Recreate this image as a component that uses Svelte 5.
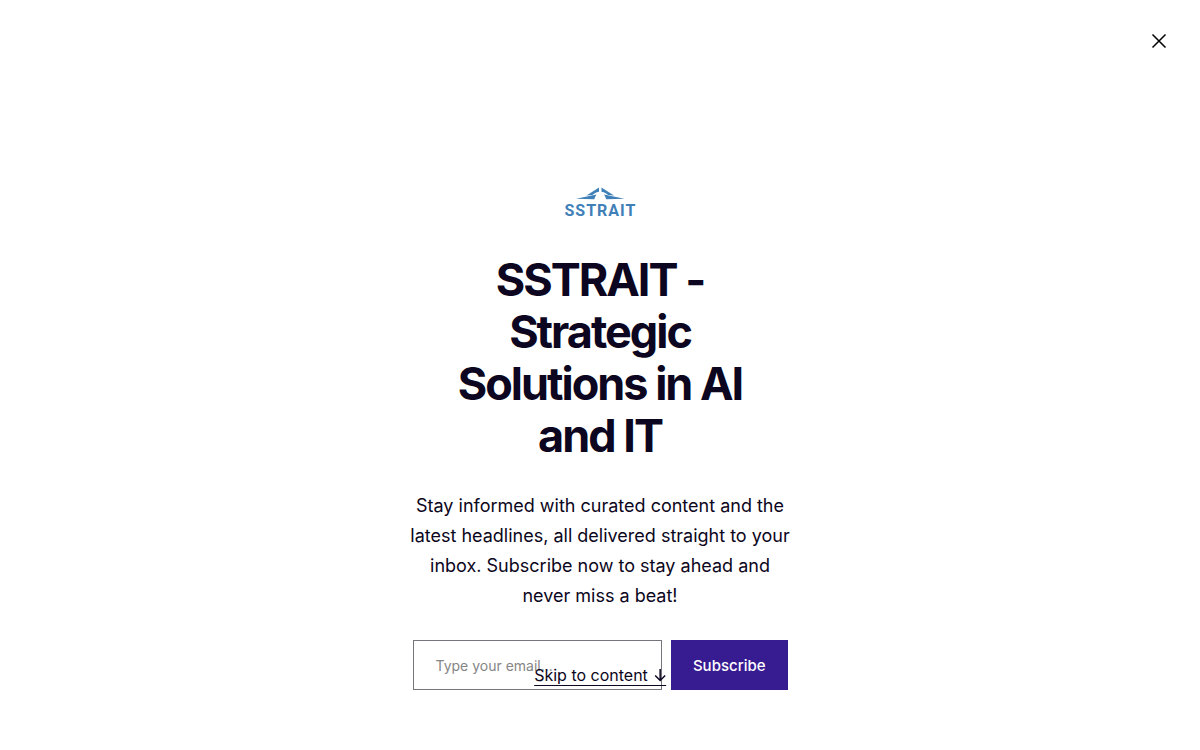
<script>
  let open = true;
  let email = "";
</script>

{#if open}
  <main class="welcome">
    <header class="bar">
      <button type="button" class="close" aria-label="Close" on:click={() => (open = false)}>
        <svg viewBox="0 0 16 16" aria-hidden="true">
          <path d="M1.5 1.5 14.5 14.5M14.5 1.5 1.5 14.5" />
        </svg>
      </button>
    </header>

    <section class="cover">
      <div class="logo">
        <!-- roof mark -->
        <svg viewBox="0 0 50 13" aria-hidden="true">
          <path d="M24 0.5V4.800C21 5.300 19 6.500 17.500 8L11.500 8.500Z" />
          <path d="M26.500 0.500V4.800C29.500 5.300 31.500 6.500 33 8L39 8.500Z" />
          <path d="M1 11.800 21.500 7.600C20.500 9 19.800 10.500 19.300 12.300Z" />
          <path d="M49.500 11.800 29 7.600C30 9 30.700 10.500 31.200 12.300Z" />
        </svg>
        <span class="wordmark">SSTRAIT</span>
      </div>

      <h1>SSTRAIT - Strategic Solutions in AI and IT</h1>
      <p>
        Stay informed with curated content and the latest headlines, all delivered straight to your
        inbox. Subscribe now to stay ahead and never miss a beat!
      </p>

      <form on:submit|preventDefault>
        <input type="email" placeholder="Type your email..." aria-label="Email" bind:value={email} />
        <button type="submit" class="subscribe">Subscribe</button>
      </form>
    </section>

    <a class="skip" href="#content">
      Skip to content
      <svg viewBox="0 0 12 14" aria-hidden="true">
        <path d="M6 1V12.500M1 7.500 6 12.500 11 7.500" />
      </svg>
    </a>
  </main>
{/if}

<style>
  :global(body) {
    margin: 0;
    background: #fff;
  }

  .welcome {
    position: relative;
    box-sizing: border-box;
    min-height: 100vh;
    padding-bottom: 60px;
    color: #0c0620;
    font-family: Inter, sans-serif;
  }

  .bar {
    display: flex;
    justify-content: flex-end;
    padding: 25px 25px 0;
  }

  .close {
    display: flex;
    padding: 8px;
    border: 0;
    background: none;
    color: #000;
    cursor: pointer;
  }
  .close svg {
    width: 16px;
    height: 16px;
  }

  svg path {
    fill: none;
    stroke: currentColor;
    stroke-width: 1.5;
  }

  .cover {
    box-sizing: border-box;
    max-width: 383px;
    margin: 0 auto;
    padding: 130px 4px 0;
    text-align: center;
  }

  .logo {
    display: flex;
    flex-direction: column;
    align-items: center;
    color: #3f80b9;
  }
  .logo svg {
    width: 50px;
    height: 13px;
  }
  .logo path {
    fill: currentColor;
    stroke: none;
  }
  .wordmark {
    padding-left: 1px;
    font: bold 16px/22px Roboto, sans-serif;
    letter-spacing: 1px;
  }

  h1 {
    margin: 32px 0 0;
    padding: 0 40px;
    font-size: 45px;
    line-height: 52px;
    font-weight: 700;
    letter-spacing: -2px;
  }

  p {
    margin: 29px -4px 0;
    font-size: 18px;
    line-height: 30px;
  }

  form {
    display: flex;
    gap: 9px;
    margin-top: 29px;
  }

  input,
  .subscribe {
    box-sizing: border-box;
    height: 50px;
    border-radius: 0;
    font-family: inherit;
  }
  input {
    flex: 1;
    min-width: 0;
    padding: 0 22px;
    border: 1px solid #77757c;
    background: #fff;
    color: inherit;
    font-size: 14px;
  }
  input::placeholder {
    color: #858585;
  }
  .subscribe {
    padding: 0 22px;
    border: 0;
    background: #371b91;
    color: #fff;
    font-size: 15px;
    font-weight: 500;
    cursor: pointer;
  }

  /* Floats over the foot of the cover. */
  .skip {
    position: absolute;
    bottom: 64px;
    left: 50%;
    display: flex;
    align-items: center;
    gap: 6px;
    border-bottom: 1px solid currentColor;
    color: inherit;
    font-size: 16px;
    line-height: 20px;
    text-decoration: none;
    white-space: nowrap;
    transform: translateX(-50%);
  }
  .skip svg {
    width: 12px;
    height: 14px;
  }
</style>
